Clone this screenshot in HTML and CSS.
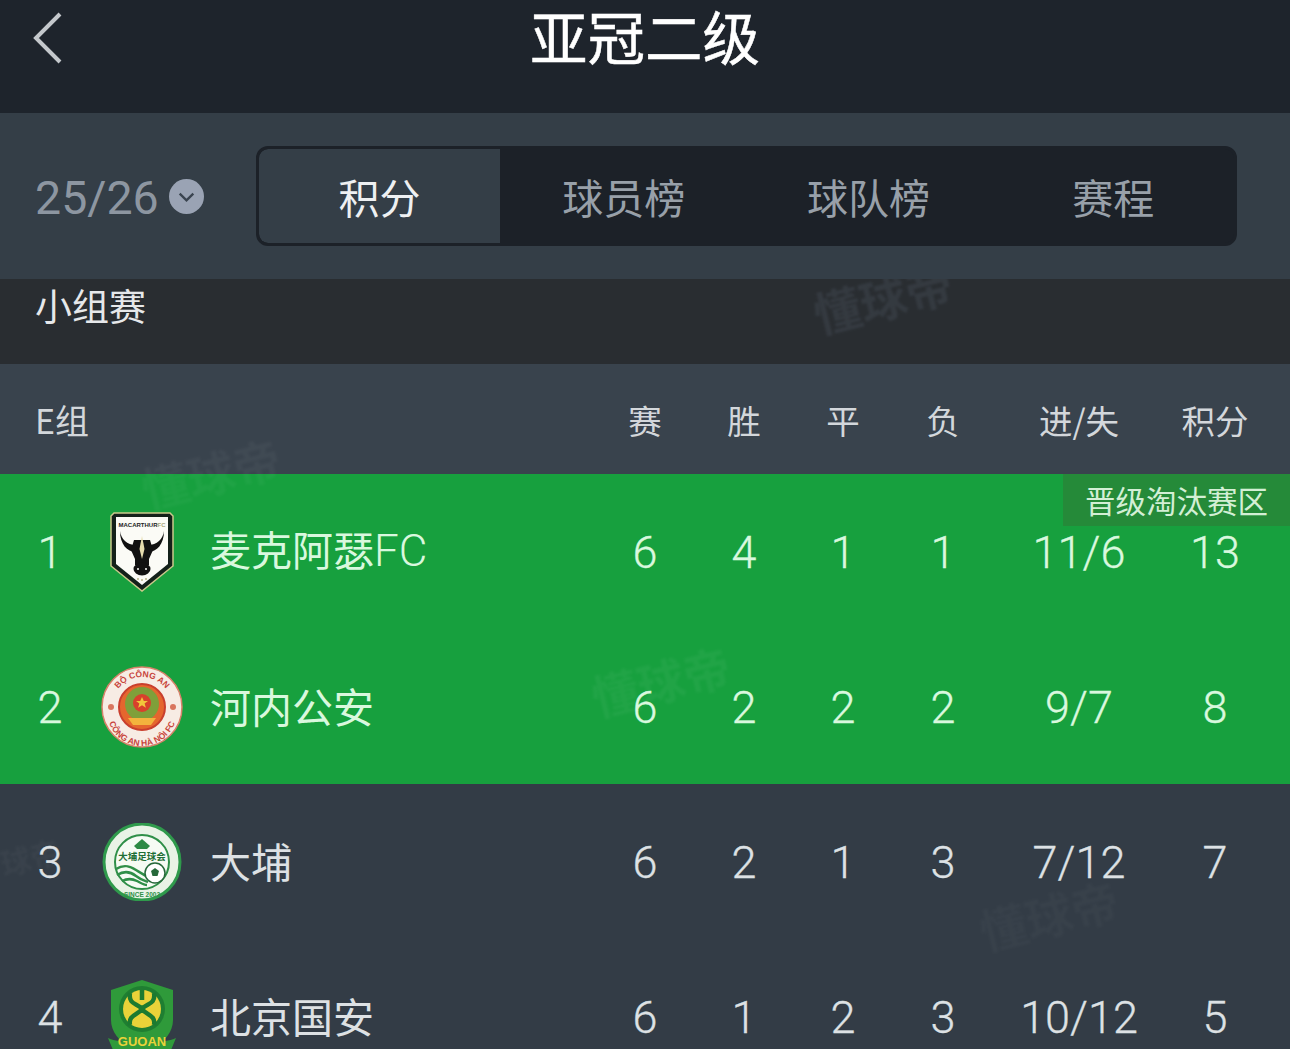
FILE: index.html
```html
<!DOCTYPE html>
<html lang="zh">
<head>
<meta charset="utf-8">
<title>亚冠二级</title>
<link rel="stylesheet" href="styles.css">
</head>
<body>
<div class="page">
  <header class="topbar">
    <svg class="back" width="32" height="52" viewBox="0 0 32 52"><path d="M28 2 4 26l24 24" fill="none" stroke="#c4c8cc" stroke-width="4"/></svg>
    <h1>亚冠二级</h1>
  </header>
  <section class="filter">
    <div class="season">
      <span>25/26</span>
      <svg width="35" height="35" viewBox="0 0 36 36"><circle cx="18" cy="18" r="18" fill="#9aa3b4"/><path d="M11 15l7 7 7-7" fill="none" stroke="#3a4450" stroke-width="2.4"/></svg>
    </div>
    <nav class="tabs">
      <div class="tab active">积分</div>
      <div class="tab">球员榜</div>
      <div class="tab">球队榜</div>
      <div class="tab">赛程</div>
    </nav>
  </section>
  <div class="stage">小组赛<div class="mark m1">懂球帝</div></div>
  <div class="row head">
    <div class="group">E组</div>
    <div>赛</div><div>胜</div><div>平</div><div>负</div><div>进/失</div><div>积分</div>
  </div>
  <div class="qualified">
    <div class="zone">晋级淘汰赛区</div>
    <div class="row team">
      <div class="rank">1</div>
      <div class="logo">
        <svg width="70" height="82" viewBox="0 0 70 82">
          <path d="M7 2h56l3 3v50L35 80 4 55V5z" fill="#14211a" stroke="#c9c98a" stroke-width="1.5"/>
          <path d="M9 6h52v47L35 74 9 53z" fill="#fbfbf6"/>
          <text x="35" y="16" class="bulltext">MACARTHUR<tspan class="bullfc">FC</tspan></text>
          <path d="M13 20c0 13 7 21 16 21v-7c-9 0-15-6-16-14zM57 20c0 13-7 21-16 21v-7c9 0 15-6 16-14z" fill="#111"/>
          <path d="M27 29h16l3 10-4 9v6H28v-6l-4-9z" fill="#111"/>
          <path d="M35 25l2.500 13-2.500 10-2.500-10z" fill="#e5dcae"/>
          <ellipse cx="35" cy="58" rx="8.500" ry="6.500" fill="#111"/>
          <circle cx="31" cy="58" r="1" fill="#fbfbf6"/><circle cx="39" cy="58" r="1" fill="#fbfbf6"/>
          <circle cx="31" cy="68" r="1" fill="#b9b58a"/><circle cx="35" cy="69" r="1" fill="#b9b58a"/><circle cx="39" cy="68" r="1" fill="#b9b58a"/>
        </svg>
      </div>
      <div class="name">麦克阿瑟<span class="latin">FC</span></div>
      <div>6</div><div>4</div><div>1</div><div>1</div><div>11/6</div><div>13</div>
    </div>
    <div class="row team">
      <div class="rank">2</div>
      <div class="logo">
        <svg width="82" height="82" viewBox="0 0 82 82">
          <circle cx="41" cy="41" r="40" fill="#f7ece4" stroke="#d8826a" stroke-width="1.5"/>
          <path id="arcTop" d="M11 41a30 30 0 0 1 60 0" fill="none"/>
          <path id="arcBot" d="M6 45a35 35 0 0 0 70 0" fill="none"/>
          <text class="cuan"><textPath href="#arcTop" startOffset="50%" text-anchor="middle">BỘ CÔNG AN</textPath></text>
          <text class="cuan"><textPath href="#arcBot" startOffset="50%" text-anchor="middle">CÔNG AN HÀ NỘI FC</textPath></text>
          <circle cx="41" cy="41" r="23" fill="#e5662e" stroke="#c93f2e" stroke-width="2"/>
          <circle cx="41" cy="38" r="17" fill="#7f9f3a"/>
          <circle cx="41" cy="37" r="9" fill="#d8402c"/>
          <path d="M41 31l1.800 4h4.200l-3.400 2.600 1.300 4.200-3.900-2.600-3.900 2.600 1.300-4.200-3.400-2.600h4.200z" fill="#f2c53b"/>
          <path d="M27 52h28l-5 7H32z" fill="#f3b33d"/>
          <circle cx="10" cy="41" r="3" fill="#d9765f"/><circle cx="72" cy="41" r="3" fill="#d9765f"/>
        </svg>
      </div>
      <div class="name">河内公安</div>
      <div>6</div><div>2</div><div>2</div><div>2</div><div>9/7</div><div>8</div>
    </div>
  </div>
  <div class="row team plain">
    <div class="rank">3</div>
    <div class="logo">
      <svg width="80" height="78" viewBox="0 0 80 78">
        <circle cx="40" cy="39" r="38" fill="#e9f3e6" stroke="#2f9a4c" stroke-width="3"/>
        <circle cx="40" cy="39" r="27" fill="#f6fbf4" stroke="#2f8f48" stroke-width="2"/>
        <path d="M32 23l8-7 8 7-3 3H35z" fill="#2e8a45"/>
        <text x="40" y="37" class="dapu">大埔足球会</text>
        <path d="M14 46c8-5 14-3 20 1s10 5 12 8M15 52c8-5 14-3 19 1s9 5 12 6M20 58c6-3 11-2 15 0s7 4 10 4" fill="none" stroke="#2f8f48" stroke-width="2.500"/>
        <circle cx="53" cy="50" r="10" fill="#fff" stroke="#26683a" stroke-width="1.500"/>
        <path d="M53 45l4 3-1.500 5h-5L49 48z" fill="#26683a"/>
        <text x="40" y="74" class="dapu-s">SINCE 2002</text>
      </svg>
    </div>
    <div class="name">大埔</div>
    <div>6</div><div>2</div><div>1</div><div>3</div><div>7/12</div><div>7</div>
  </div>
  <div class="row team plain">
    <div class="rank">4</div>
    <div class="logo">
      <svg width="72" height="78" viewBox="0 0 72 78">
        <path d="M36 2 67 12v30c0 14-12 26-31 34C17 68 5 56 5 42V12z" fill="#2f9a3a"/>
        <circle cx="36" cy="31" r="23" fill="#1f7e31"/>
        <circle cx="36" cy="31" r="19" fill="#e9d239"/>
        <path d="M24 15c-2 12 8 10 12 16 4-6 14-4 12-16M24 47c-2-10 8-10 12-16 4 6 14 6 12 16M36 12v10" fill="none" stroke="#1c7a30" stroke-width="4.500"/>
        <path d="M2 60c10 6 58 6 68 0l-5 12H7z" fill="#2f9a3a"/>
        <text x="36" y="68" class="guoan">GUOAN</text>
      </svg>
    </div>
    <div class="name">北京国安</div>
    <div>6</div><div>1</div><div>2</div><div>3</div><div>10/12</div><div>5</div>
  </div>
  <div class="mark m2">懂球帝</div>
  <div class="mark m3">懂球帝</div>
  <div class="mark m4">球帝</div>
  <div class="mark m5">懂球帝</div>
</div>
</body>
</html>
```
FILE: styles.css
```css
* { box-sizing: border-box; }
html, body { margin: 0; padding: 0; background: #333c46; }
body { font-family: "Noto Sans CJK SC", "Noto Sans", sans-serif; }
.page { position: relative; width: 1290px; height: 1049px; overflow: hidden; }

.topbar { height: 113px; background: #1e242c; position: relative; display: flex; justify-content: center; }
.topbar h1 { margin: 0; font-size: 57.500px; line-height: 70px; font-weight: 400; color: #fff; -webkit-text-stroke: 0.5px #fff; }
.back { position: absolute; left: 32px; top: 12px; }

.filter { height: 166px; background: #343e47; display: flex; align-items: center; padding: 0 53px 0 35px; }
.season { width: 221px; display: flex; align-items: center; gap: 10px; color: #8d96a1; font: 400 46.500px/1 Roboto, sans-serif; }
.season span { padding-top: 4px; }
.tabs { flex: 1; height: 100px; margin-top: -1px; display: grid; grid-template-columns: 241px repeat(3, 1fr); background: #1c2128; border: 3px solid #1c2128; border-radius: 12px; overflow: hidden; }
.tab { display: flex; align-items: center; justify-content: center; padding-left: 3px; font-size: 41px; color: #98a0a9; }
.tab.active { padding-left: 0; background: #343e47; color: #eef0f2; border-radius: 9px 0 0 9px; }

.stage { position: relative; height: 85px; background: #292d31; padding: 0 0 0 35px; font-size: 37px; line-height: 52px; color: #e6e8ea; overflow: hidden; }

.row { display: grid; grid-template-columns: 595px 100px 98px 100px 100px 172px 100px; align-items: center; text-align: center; }
.head { height: 110px; background: #39434d; font-size: 33.500px; color: #d3d7db; }
.head .group { text-align: left; padding-left: 35px; font-size: 34px; }

.qualified { position: relative; background: #17a03e; color: #d9f8de; height: 310px; }
.zone { position: absolute; right: 0; top: 0; width: 227px; height: 52px; background: #258a39; display: flex; align-items: center; justify-content: center; font-size: 30.500px; line-height: 50px; color: #d3efd5; }

.team { height: 155px; font: 300 45px/1 Roboto, "Noto Sans CJK SC", sans-serif; position: relative; padding-top: 2px; -webkit-text-stroke: 0.3px currentColor; }
.plain { color: #dde1e4; background: #333c46; }
.rank { position: absolute; left: 30px; width: 40px; margin-top: 2px; text-align: center; }
.logo { position: absolute; left: 92px; width: 100px; display: flex; justify-content: center; -webkit-text-stroke: 0; }
.name { text-align: left; padding: 0 0 4px 210px; font: 400 41px/1 "Noto Sans CJK SC", sans-serif; -webkit-text-stroke: 0; }
.latin { font-family: Roboto, sans-serif; font-weight: 300; font-size: 44px; }

.bulltext { font: 700 6px "Liberation Sans", sans-serif; text-anchor: middle; fill: #222; }
.bullfc { fill: #a9a57a; }
.cuan { font: 700 8.500px "Liberation Sans", sans-serif; fill: #c8433a; }
.dapu { font: 700 9.500px "Noto Sans CJK SC", sans-serif; text-anchor: middle; fill: #1e6e35; }
.dapu-s { font: 700 6.500px "Liberation Sans", sans-serif; text-anchor: middle; fill: #2f8f48; }
.guoan { font: 700 13px "Liberation Sans", sans-serif; text-anchor: middle; fill: #e9d239; }

.mark { position: absolute; font-family: "Noto Sans CJK SC", sans-serif; font-size: 47px; line-height: 60px; font-weight: 700; text-align: left; transform: rotate(-14deg); color: rgba(255,255,255,0.03); white-space: nowrap; filter: blur(0.8px); pointer-events: none; }
.m1 { left: 812px; top: -12px; color: rgba(120,135,155,0.14); }
.m2 { left: 140px; top: 442px; color: rgba(255,255,255,0.035); }
.m3 { left: 590px; top: 650px; color: rgba(255,255,255,0.045); }
.m4 { left: 0; top: 826px; font-size: 30px; color: rgba(255,255,255,0.03); }
.m5 { left: 978px; top: 884px; color: rgba(255,255,255,0.025); }
```
